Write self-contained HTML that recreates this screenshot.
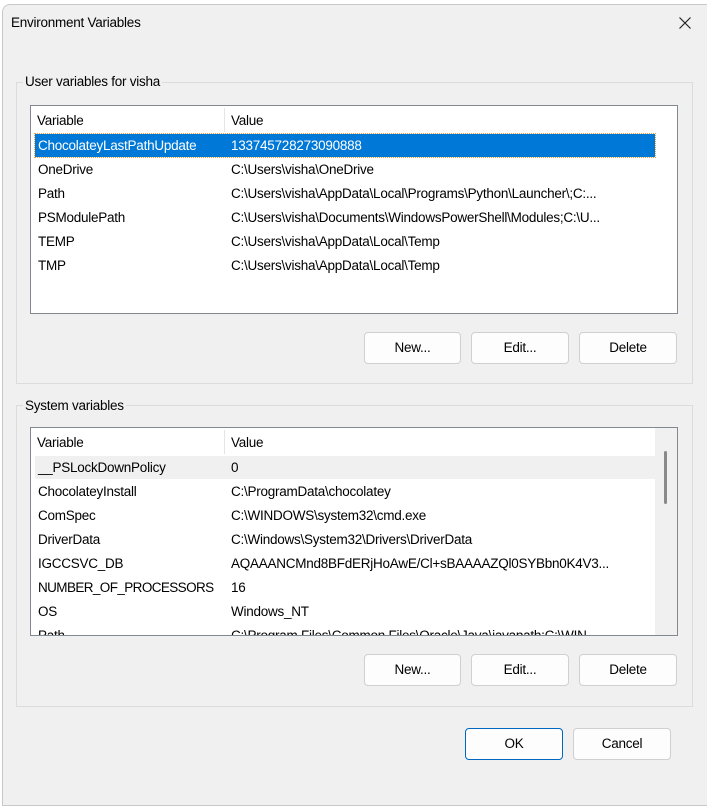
<!DOCTYPE html><html><head><style>
body{margin:0;width:707px;height:776px;background:#fff;font-family:"Liberation Sans",sans-serif;font-size:13.5px;letter-spacing:-0.25px;color:#000;position:relative;overflow:hidden}
.dlg{position:absolute;left:2px;top:4px;width:720px;height:800px;background:#f0f0f0;border:1px solid #c8c8c8;border-radius:8px 0 0 0}
.a{position:absolute;white-space:nowrap}
.grp{position:absolute;border:1px solid #dcdcdc}
.leg{position:absolute;background:#f0f0f0;padding:0 2px;line-height:16px}
.lv{position:absolute;background:#fff;border:1px solid #828790}
.btn{position:absolute;background:#fdfdfd;border:1px solid #d0d0d0;border-radius:4px;text-align:center;line-height:30px;box-sizing:border-box}
.row{position:absolute;left:4px;width:620px;height:23px;line-height:23px}
.row span{position:absolute}
.c1{left:3px}.c2{left:196px}
</style></head><body>
<div class="dlg"></div>
<div class="a" style="left:11px;top:15px">Environment Variables</div>
<svg class="a" style="left:679px;top:17px" width="12" height="12"><path d="M0.5 0.5L11.5 11.5M11.5 0.5L0.5 11.5" stroke="#222" stroke-width="1.2"/></svg>

<div class="grp" style="left:16px;top:82px;width:675px;height:300px"></div>
<div class="leg" style="left:23px;top:74px">User variables for visha</div>
<div class="lv" style="left:30px;top:105px;width:646px;height:207px">
 <div class="a" style="left:193px;top:2px;width:1px;height:24px;background:#e5e5e5"></div>
 <div class="a" style="left:6px;top:7px">Variable</div><div class="a" style="left:200px;top:7px">Value</div>
 <div class="row" style="top:28px;background:#0078d7;color:#fff;outline:1px dotted #f0a040"><span class="c1">ChocolateyLastPathUpdate</span><span class="c2">133745728273090888</span></div>
 <div class="row" style="top:52px"><span class="c1">OneDrive</span><span class="c2">C:\Users\visha\OneDrive</span></div>
 <div class="row" style="top:76px"><span class="c1">Path</span><span class="c2">C:\Users\visha\AppData\Local\Programs\Python\Launcher\;C:...</span></div>
 <div class="row" style="top:100px"><span class="c1">PSModulePath</span><span class="c2">C:\Users\visha\Documents\WindowsPowerShell\Modules;C:\U...</span></div>
 <div class="row" style="top:124px"><span class="c1">TEMP</span><span class="c2">C:\Users\visha\AppData\Local\Temp</span></div>
 <div class="row" style="top:148px"><span class="c1">TMP</span><span class="c2">C:\Users\visha\AppData\Local\Temp</span></div>
</div>
<div class="btn" style="left:364px;top:332px;width:97px;height:32px">New...</div>
<div class="btn" style="left:471px;top:332px;width:98px;height:32px">Edit...</div>
<div class="btn" style="left:579px;top:332px;width:98px;height:32px">Delete</div>

<div class="grp" style="left:16px;top:405px;width:675px;height:300px"></div>
<div class="leg" style="left:23px;top:398px">System variables</div>
<div class="lv" style="left:30px;top:427px;width:646px;height:207px;overflow:hidden">
 <div class="a" style="left:624px;top:0;width:22px;height:207px;background:#f0f0f0"></div>
 <div class="a" style="left:633px;top:23px;width:3px;height:53px;background:#8a8a8a;border-radius:2px"></div>
 <div class="a" style="left:193px;top:2px;width:1px;height:24px;background:#e5e5e5"></div>
 <div class="a" style="left:6px;top:7px">Variable</div><div class="a" style="left:200px;top:7px">Value</div>
 <div class="row" style="top:28px;background:#f0f0f0"><span class="c1">__PSLockDownPolicy</span><span class="c2">0</span></div>
 <div class="row" style="top:52px"><span class="c1">ChocolateyInstall</span><span class="c2">C:\ProgramData\chocolatey</span></div>
 <div class="row" style="top:76px"><span class="c1">ComSpec</span><span class="c2">C:\WINDOWS\system32\cmd.exe</span></div>
 <div class="row" style="top:100px"><span class="c1">DriverData</span><span class="c2">C:\Windows\System32\Drivers\DriverData</span></div>
 <div class="row" style="top:124px"><span class="c1">IGCCSVC_DB</span><span class="c2">AQAAANCMnd8BFdERjHoAwE/Cl+sBAAAAZQl0SYBbn0K4V3...</span></div>
 <div class="row" style="top:148px"><span class="c1" style="letter-spacing:-0.6px">NUMBER_OF_PROCESSORS</span><span class="c2">16</span></div>
 <div class="row" style="top:172px"><span class="c1">OS</span><span class="c2">Windows_NT</span></div>
 <div class="row" style="top:196px"><span class="c1">Path</span><span class="c2">C:\Program Files\Common Files\Oracle\Java\javapath;C:\WIN...</span></div>
</div>
<div class="btn" style="left:364px;top:654px;width:97px;height:32px">New...</div>
<div class="btn" style="left:471px;top:654px;width:98px;height:32px">Edit...</div>
<div class="btn" style="left:579px;top:654px;width:98px;height:32px">Delete</div>

<div class="btn" style="left:465px;top:728px;width:98px;height:32px;border-color:#0067c0">OK</div>
<div class="btn" style="left:573px;top:728px;width:98px;height:32px">Cancel</div>
</body></html>
